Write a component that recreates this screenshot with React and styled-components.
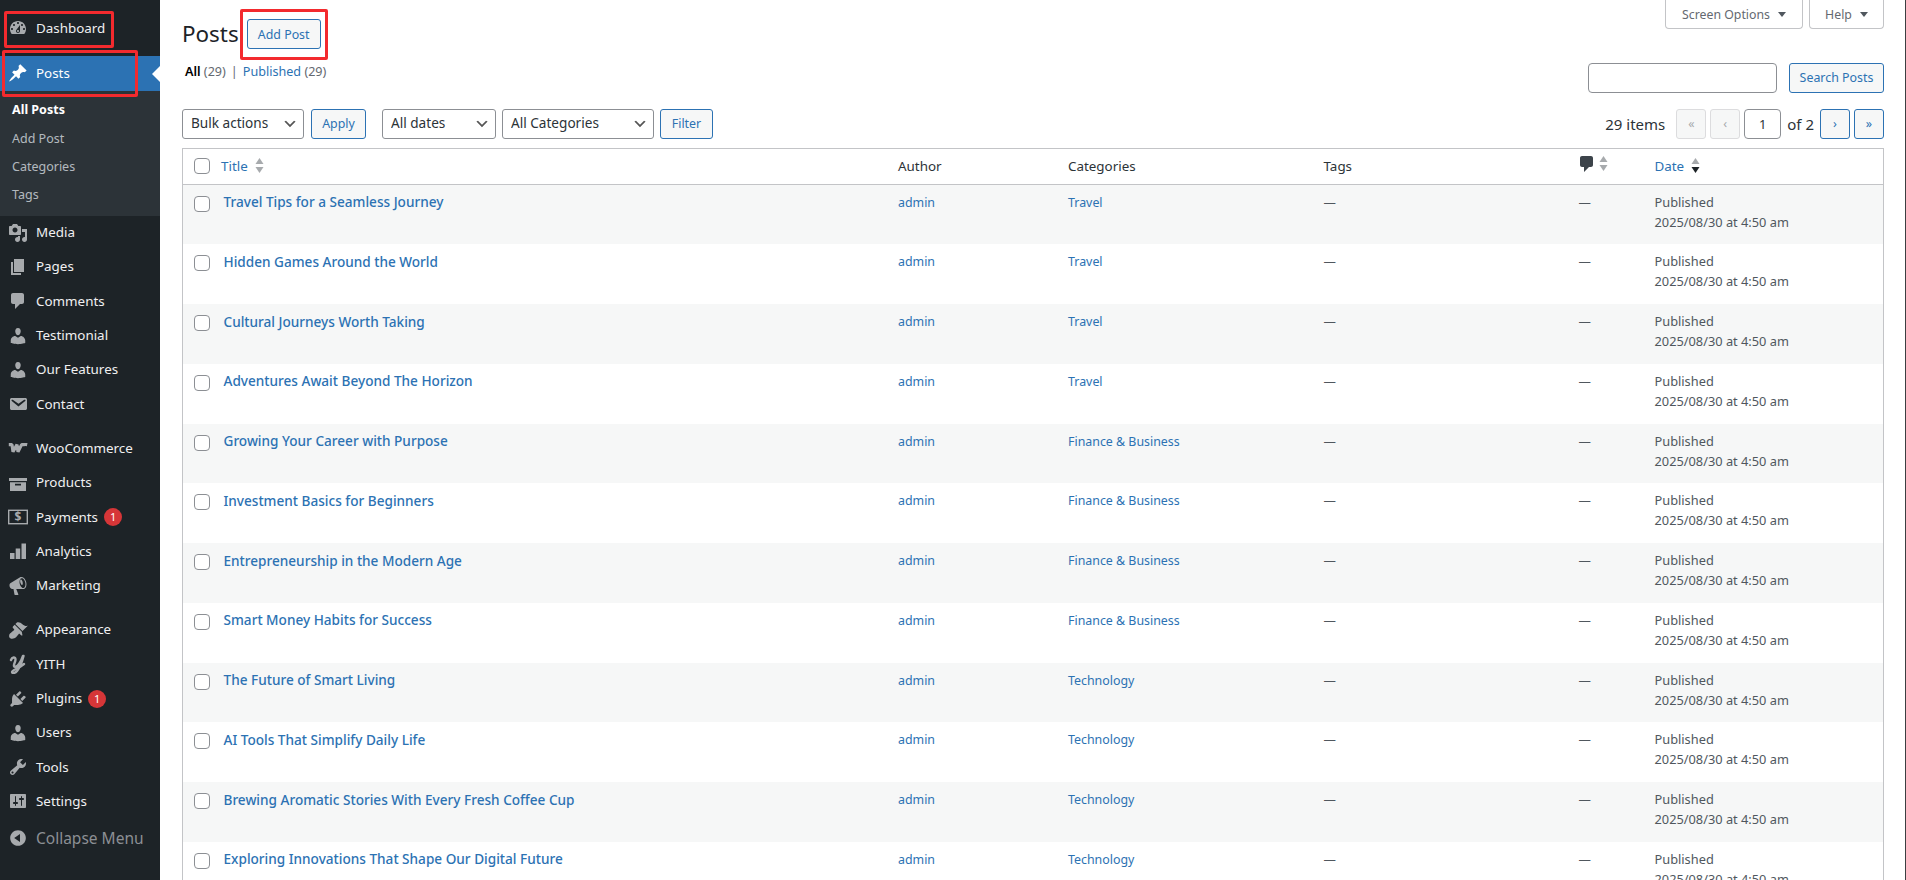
import React from 'react';
import styled, { createGlobalStyle } from 'styled-components';

const FONT = '"Noto Sans", "Open Sans", sans-serif';
const BLUE = '#2c72b3';

const GlobalStyle = createGlobalStyle`
  html, body { margin: 0; padding: 0; background: #fff; }
  body { font-family: ${FONT}; font-size: 13px; line-height: 1.4em; color: #3c434a; overflow: hidden; }
  * { box-sizing: border-box; }
`;

const Page = styled.div`
  position: relative;
  display: flex;
  height: 100vh;
  overflow: hidden;
  border-right: 1px solid #3c3f42;
`;

/* sidebar */
const Sidebar = styled.aside`
  width: 160px;
  flex: none;
  background: #1d2327;
  padding-top: 11px;
`;
const MenuItem = styled.a`
  position: relative;
  display: flex;
  align-items: center;
  height: 34.3px;
  font-size: 13.4px;
  color: ${p => (p.$active ? '#fff' : '#f0f0f1')};
  background: ${p => (p.$active ? BLUE : 'transparent')};
  svg { fill: ${p => (p.$active ? '#fff' : '#a7aaad')}; }
`;
const MenuLabel = styled.span`
  margin-top: -1px;
`;
const IconSlot = styled.span`
  width: 36px;
  flex: none;
  display: flex;
  justify-content: center;
  svg { width: 20px; height: 20px; display: block; }
`;
const Gap = styled.div`
  height: ${p => p.$h}px;
`;
const ActiveArrow = styled.span`
  position: absolute;
  right: 0;
  top: 10px;
  border: 8px solid transparent;
  border-left-width: 0;
  border-right-color: #fff;
`;
const Badge = styled.span`
  width: 18px;
  height: 18px;
  margin-left: 6px;
  border-radius: 50%;
  background: #d63638;
  color: #fff;
  font-size: 11px;
  line-height: 18px;
  text-align: center;
`;
const Submenu = styled.div`
  background: #2c3338;
  height: 125px;
  padding-top: 5.5px;
`;
const SubItem = styled.a`
  display: flex;
  align-items: center;
  height: 28.4px;
  padding-left: 12px;
  font-size: 12.5px;
  font-weight: ${p => (p.$current ? 700 : 400)};
  color: ${p => (p.$current ? '#fff' : 'rgba(240,246,252,.7)')};
`;
const Collapse = styled.div`
  display: flex;
  align-items: center;
  height: 34px;
  margin-top: 2px;
  font-size: 15.5px;
  color: #8c8f94;
  svg { fill: #a7aaad; }
`;

/* main column */
const Main = styled.main`
  flex: 1;
  min-width: 0;
  padding: 0 21px 0 22px;
`;
const TopRow = styled.div`
  display: flex;
  justify-content: space-between;
  height: 63px;
`;
const HeadLeft = styled.div`
  display: flex;
  align-items: flex-start;
  padding-top: 19px;
  gap: 8px;
`;
const PageTitle = styled.h1`
  margin: 0;
  font-size: 22.4px;
  font-weight: 400;
  line-height: 29px;
  color: #1d2327;
`;
const ScreenTabs = styled.div`
  display: flex;
  gap: 6px;
`;
const ScreenTab = styled.button`
  display: flex;
  align-items: center;
  gap: 8px;
  height: 29px;
  width: ${p => p.$w}px;
  justify-content: center;
  background: #fff;
  border: 1px solid #c3c4c7;
  border-top: none;
  border-radius: 0 0 4px 4px;
  font: 12.3px ${FONT};
  color: #646970;
  padding: 0;
`;
const TabCaret = styled.span`
  border: 4.5px solid transparent;
  border-top: 5px solid #50575e;
  border-bottom: none;
`;
const Button = styled.button`
  height: ${p => (p.$h ? p.$h : 29.5)}px;
  width: ${p => p.$w}px;
  flex: none;
  padding: 0;
  background: #f6f7f7;
  border: 1px solid ${p => (p.$disabled ? '#dcdcde' : BLUE)};
  border-radius: 3px;
  font: 12.4px ${FONT};
  color: ${p => (p.$disabled ? '#a7aaad' : BLUE)};
`;
const ListBar = styled.div`
  display: flex;
  justify-content: space-between;
  align-items: flex-start;
  height: 46px;
`;
const Views = styled.div`
  padding: 0 3px;
  margin-top: -1px;
  font-size: 12.6px;
  line-height: 20px;
  color: #646970;
  b { color: #000; font-weight: 600; }
  a { color: ${BLUE}; }
  i { font-style: normal; margin: 0 5px; color: #646970; }
`;
const SearchBox = styled.div`
  display: flex;
  gap: 12px;
`;
const TextInput = styled.input`
  width: ${p => p.$w}px;
  height: 29.5px;
  padding: 0;
  border: 1px solid #8c8f94;
  border-radius: 4px;
  background: #fff;
  font: 13px ${FONT};
  color: #2c3338;
  text-align: center;
`;
const Toolbar = styled.div`
  display: flex;
  justify-content: space-between;
  align-items: center;
  height: 29.5px;
  margin-bottom: 9px;
`;
const ToolGroup = styled.div`
  display: flex;
  align-items: center;
`;
const Select = styled.select`
  appearance: none;
  width: ${p => p.$w}px;
  height: 29.5px;
  margin: 0 ${p => p.$mr}px 0 ${p => p.$ml || 0}px;
  padding: 0 24px 2px 8px;
  border: 1px solid #8c8f94;
  border-radius: 3px;
  font: 13.6px ${FONT};
  color: #2c3338;
  background: #fff url("data:image/svg+xml,%3Csvg xmlns='http://www.w3.org/2000/svg' width='20' height='20'%3E%3Cpath d='M5 6l5 5 5-5 2 1-7 7-7-7 2-1z' fill='%23555'/%3E%3C/svg%3E") no-repeat right 5px top 55% / 16px 16px;
`;
const Pager = styled.div`
  display: flex;
  align-items: center;
  gap: 4px;
  font-size: 15px;
  color: #2c3338;
`;
const PagerText = styled.span`
  margin: 0 ${p => p.$mr}px 0 ${p => p.$ml}px;
`;

/* table */
const Table = styled.table`
  width: 100%;
  table-layout: fixed;
  border-collapse: separate;
  border-spacing: 0;
  border: 1px solid #c3c4c7;
`;
const HeadCell = styled.th`
  height: 36px;
  padding: 0 10px;
  text-align: left;
  font-weight: 400;
  font-size: 13.4px;
  color: #2c3338;
  border-bottom: 1px solid #c3c4c7;
  vertical-align: middle;
`;
const SortLink = styled.span`
  display: inline-flex;
  align-items: center;
  gap: ${p => (p.$plain ? 5 : 7)}px;
  color: ${p => (p.$plain ? '#3c434a' : BLUE)};
`;
const CheckHead = styled.th`
  padding: 0 0 0 11px;
  border-bottom: 1px solid #c3c4c7;
  vertical-align: middle;
`;
const CheckCell = styled.td`
  padding: 11px 0 0 11px;
  vertical-align: top;
`;
const Check = styled.span`
  display: block;
  width: 16px;
  height: 16px;
  border: 1px solid #8c8f94;
  border-radius: 4px;
  background: #fff;
`;
const Row = styled.tr`
  height: 59.75px;
  background: ${p => (p.$alt ? '#f6f7f7' : '#fff')};
`;
const Cell = styled.td`
  padding: ${p => (p.$primary ? '7.500px 10px 0 12.500px' : p.$date ? '7px 10px 0' : '8px 10px 0')};
  vertical-align: top;
  font-size: ${p => (p.$date ? 12.8 : 12.4)}px;
  line-height: 20px;
  color: #50575e;
`;
const PostTitle = styled.a`
  font-size: 13.6px;
  font-weight: 500;
  color: ${BLUE};
`;
const CellLink = styled.a`
  color: ${BLUE};
`;

/* red marks drawn over the screenshot */
const Annotation = styled.div`
  position: absolute;
  left: ${p => p.$x}px;
  top: ${p => p.$y}px;
  width: ${p => p.$w}px;
  height: ${p => p.$h}px;
  border: 3px solid #f32a2e;
  border-radius: 2px;
  pointer-events: none;
`;

const D = {
  dashboard: 'M3.76 16h12.48c1.1-1.37 1.76-3.11 1.76-5 0-4.42-3.58-8-8-8s-8 3.58-8 8c0 1.89.66 3.63 1.76 5zM10 4c.55 0 1 .45 1 1s-.45 1-1 1-1-.45-1-1 .45-1 1-1zM6 6c.55 0 1 .45 1 1s-.45 1-1 1-1-.45-1-1 .45-1 1-1zm8 0c.55 0 1 .45 1 1s-.45 1-1 1-1-.45-1-1 .45-1 1-1zm-5.37 5.55L12 7v6c0 1.1-.9 2-2 2s-2-.9-2-2c0-.57.24-1.08.63-1.45zM4 10c.55 0 1 .45 1 1s-.45 1-1 1-1-.45-1-1 .45-1 1-1zm12 0c.55 0 1 .45 1 1s-.45 1-1 1-1-.45-1-1 .45-1 1-1zm-5 3c0-.55-.45-1-1-1s-1 .45-1 1 .45 1 1 1 1-.45 1-1z',
  post: 'M10.44 3.02l1.82-1.82 6.36 6.35-1.83 1.82c-1.05-.68-2.48-.57-3.41.36l-.75.75c-.92.93-1.04 2.35-.35 3.41l-1.83 1.82-2.41-2.41-2.8 2.79c-.42.42-3.38 2.71-3.8 2.29s1.86-3.39 2.28-3.81l2.79-2.79L4.1 9.36l1.83-1.82c1.05.69 2.48.57 3.4-.36l.75-.75c.93-.92 1.05-2.35.36-3.41z',
  media: 'M13 11V4c0-.55-.45-1-1-1h-1.67L9 1H5L3.67 3H2c-.55 0-1 .45-1 1v7c0 .55.45 1 1 1h10c.55 0 1-.45 1-1zM7 4.5c1.38 0 2.5 1.12 2.5 2.5S8.38 9.5 7 9.5 4.5 8.38 4.5 7 5.62 4.5 7 4.5zM14 6h5v10.5c0 1.38-1.12 2.5-2.5 2.5S14 17.88 14 16.5s1.12-2.5 2.5-2.5c.17 0 .34.02.5.05V9h-3V6zm-4 8.05V13h2v3.5c0 1.38-1.12 2.5-2.5 2.5S7 17.88 7 16.5 8.12 14 9.5 14c.17 0 .34.02.5.05z',
  page: 'M6 15V2h10v13H6zm-1 1h8v2H3V5h2v11z',
  comment: 'M5 2h9c1.1 0 2 .9 2 2v7c0 1.1-.9 2-2 2h-2l-5 5v-5H5c-1.1 0-2-.9-2-2V4c0-1.1.9-2 2-2z',
  user: 'M10 9.25c-2.27 0-2.73-3.44-2.73-3.44C7 4.02 7.82 2 9.97 2c2.16 0 2.98 2.02 2.71 3.81 0 0-.41 3.44-2.68 3.44zm0 2.57L12.72 10c2.39 0 4.52 2.33 4.52 4.53v2.49s-3.65 1.13-7.24 1.13c-3.65 0-7.24-1.13-7.24-1.13v-2.49c0-2.25 1.94-4.48 4.47-4.48z',
  email: 'M3.87 4h13.25C18.37 4 19 4.59 19 5.79v8.42c0 1.19-.63 1.79-1.88 1.79H3.87c-1.25 0-1.88-.6-1.88-1.79V5.79c0-1.2.63-1.79 1.88-1.79zm6.62 8.6l6.74-5.53c.24-.2.43-.66.13-1.07-.29-.41-.82-.42-1.17-.17l-5.7 3.86L4.8 5.83c-.35-.25-.88-.24-1.17.17-.3.41-.11.87.13 1.07z',
  archive: 'M1 5h18v3H1zM2 9.2h16V18H2zM7 10.8v1.6h6v-1.6z',
  bars: 'M2 12h4.5v6H2zM7.7 7.5h4.5V18H7.7zM13.5 2.5H18V18h-4.5z',
  megaphone: 'M18.15 5.94c.46 1.62.38 3.22-.02 4.48-.42 1.28-1.26 2.18-2.3 2.48-.16.06-.26.06-.4.06-.06.02-.12.02-.18.02-.06.02-.14.02-.22.02h-6.8l2.22 5.5c.02.14-.06.26-.14.34-.08.1-.24.16-.34.16H6.95c-.1 0-.26-.06-.34-.16-.08-.08-.16-.2-.14-.34l-1-5.5H4.25l-.02-.02c-.5.06-1.08-.18-1.54-.62s-.88-1.08-1.06-1.88c-.24-.8-.2-1.56-.02-2.2.18-.62.58-1.08 1.06-1.3l.02-.02 9-5.4c.1-.06.18-.1.24-.16.06-.04.14-.08.24-.12.16-.08.28-.12.5-.18 1.04-.3 2.24.1 3.22 1 .98.86 1.8 2.24 2.26 3.86zm-2.58 5.98h-.02c.4-.1.74-.34 1.04-.7.58-.7.86-1.76.86-3.04 0-.64-.1-1.3-.26-1.98-.5-1.72-1.36-3.08-2.36-3.7-.48-.28-.98-.36-1.4-.2h-.02c-.4.1-.74.34-1.04.7-.58.7-.86 1.76-.86 3.04 0 .64.1 1.3.26 1.98.5 1.72 1.36 3.08 2.36 3.7.48.28.98.36 1.44.2zm-1.12-6.68c.38 1.28.48 2.4.28 3.1-.12.36-.48.6-.86.54-.12-.02-.26-.1-.4-.22-.38-.34-.86-1.08-1.14-2.14-.28-1.06-.28-2.02-.02-2.7.08-.2.2-.34.36-.4.16-.06.34-.04.52.04.42.24.94.96 1.26 1.78z',
  brush: 'M14.48 11.06L7.41 3.99l1.5-1.5c.5-.56 2.3-.47 3.51.32 1.21.8 1.43 1.28 2.91 2.1 1.18.64 2.45 1.26 4.45.85zm-.71.71L6.7 4.7 4.93 6.47c-.39.39-.39 1.02 0 1.41l1.06 1.06c.39.39.39 1.03 0 1.42-.6.6-1.43 1.11-2.21 1.69-.35.26-.7.53-1.01.84C1.43 13.23.28 16.4 2 18c1.53 1.63 4.77.63 6.05-.64.31-.31.58-.66.84-1.01.58-.78 1.09-1.61 1.69-2.21.39-.39 1.03-.39 1.42 0l1.06 1.06c.39.39 1.02.39 1.41 0z',
  plugin: 'M13.11 4.36L9.87 7.6 8 5.73l3.24-3.24c.35-.34 1.05-.2 1.56.32.52.51.66 1.21.31 1.55zm-8 1.77l.91-1.12 9.01 9.01-1.19.84c-.71.71-2.63 1.16-3.82 1.16H6.14L4.9 17.26c-.59.59-1.54.59-2.12 0-.59-.58-.59-1.53 0-2.12l1.24-1.24v-3.88c0-1.13.4-3.19 1.09-3.89zm7.26 3.97l3.24-3.24c.34-.35 1.04-.21 1.55.31.52.51.66 1.21.31 1.55l-3.24 3.25z',
  tools: 'M16.68 9.77c-1.34 1.34-3.3 1.67-4.95.99l-5.41 6.52c-.99.99-2.59.99-3.58 0s-.99-2.59 0-3.57l6.52-5.42c-.68-1.65-.35-3.61.99-4.95 1.28-1.28 3.12-1.62 4.72-1.06l-2.89 2.89 2.82 2.82 2.86-2.87c.53 1.58.18 3.39-1.08 4.67zM3.81 16.21c.4.39 1.04.39 1.43 0 .4-.4.4-1.04 0-1.43-.39-.4-1.03-.4-1.43 0-.39.39-.39 1.03 0 1.43z',
  settings: 'M18 16V4c0-.55-.45-1-1-1H3c-.55 0-1 .45-1 1v12c0 .55.45 1 1 1h14c.55 0 1-.45 1-1zM8 11h1c.55 0 1 .45 1 1s-.45 1-1 1H8v1.5c0 .28-.22.5-.5.5s-.5-.22-.5-.5V13H6c-.55 0-1-.45-1-1s.45-1 1-1h1V5.5c0-.28.22-.5.5-.5s.5.22.5.5V11zm5-2h-1c-.55 0-1-.45-1-1s.45-1 1-1h1V5.5c0-.28.22-.5.5-.5s.5.22.5.5V7h1c.55 0 1 .45 1 1s-.45 1-1 1h-1v5.5c0 .28-.22.5-.5.5s-.5-.22-.5-.5V9z',
  collapse: 'M10 2.16c4.33 0 7.84 3.51 7.84 7.84s-3.51 7.84-7.84 7.84S2.16 14.33 2.16 10 5.71 2.16 10 2.16zm2 11.72V6.12L6.18 9.97z',
};

const Icon = ({ name }) => (
  <IconSlot>
    <svg viewBox="0 0 20 20"><path d={D[name]} fillRule="evenodd" /></svg>
  </IconSlot>
);

const WooIcon = () => (
  <IconSlot>
    <svg viewBox="0 0 20 20">
      <path d="M.8 5.600h3.200l1 7.200 4-7.200 1 7.200 3.600-7.200c2 0 4.600-.2 5.600 0" fill="none" stroke="#a7aaad" strokeWidth="3.200" strokeLinejoin="bevel" />
    </svg>
  </IconSlot>
);

const PaymentsIcon = () => (
  <IconSlot>
    <svg viewBox="0 0 20 20">
      <rect x=".7" y="3.3" width="18.6" height="13.4" fill="none" stroke="#a7aaad" strokeWidth="1.4" />
      <text x="10" y="14.4" textAnchor="middle" fontSize="12" fontWeight="700" fontFamily={FONT} fill="#a7aaad">$</text>
    </svg>
  </IconSlot>
);

const YithIcon = () => (
  <IconSlot>
    <svg viewBox="0 0 20 20">
      <path
        d="M3 6C4 3 7.5 2.5 7.5 5.5 7.5 8 5.5 10 6 12c.5 1.5 3 1 5-2 2-2.5 3-5 4-8M15.5 2C14 8 12 13 9 17c-2 2.5-5 2.5-5 1 0-1.5 3.5-2.500 6-4 2-1 4-2.500 6-4"
        fill="none"
        stroke="#a7aaad"
        strokeWidth="2.4"
        strokeLinecap="round"
      />
    </svg>
  </IconSlot>
);

const SortArrows = ({ dark }) => (
  <svg width="9" height="15" viewBox="0 0 9 15">
    <path d="M4.5 0L8.5 6H.5z" fill="#a7aaad" />
    <path d="M4.5 15L.5 9h8z" fill={dark ? '#1d2327' : '#a7aaad'} />
  </svg>
);

const CommentHead = () => (
  <svg width="15" height="18" viewBox="2 1 15 18">
    <path d={D.comment} fill="#3c434a" />
  </svg>
);

const TOP_MENU = [
  { name: 'media', label: 'Media' },
  { name: 'page', label: 'Pages' },
  { name: 'comment', label: 'Comments' },
  { name: 'user', label: 'Testimonial' },
  { name: 'user', label: 'Our Features' },
  { name: 'email', label: 'Contact' },
  { gap: 10, custom: WooIcon, label: 'WooCommerce' },
  { name: 'archive', label: 'Products' },
  { custom: PaymentsIcon, label: 'Payments', badge: 1 },
  { name: 'bars', label: 'Analytics' },
  { name: 'megaphone', label: 'Marketing' },
  { gap: 10, name: 'brush', label: 'Appearance' },
  { custom: YithIcon, label: 'YITH' },
  { name: 'plugin', label: 'Plugins', badge: 1 },
  { name: 'user', label: 'Users' },
  { name: 'tools', label: 'Tools' },
  { name: 'settings', label: 'Settings' },
];

const POSTS = [
  ['Travel Tips for a Seamless Journey', 'Travel'],
  ['Hidden Games Around the World', 'Travel'],
  ['Cultural Journeys Worth Taking', 'Travel'],
  ['Adventures Await Beyond The Horizon', 'Travel'],
  ['Growing Your Career with Purpose', 'Finance & Business'],
  ['Investment Basics for Beginners', 'Finance & Business'],
  ['Entrepreneurship in the Modern Age', 'Finance & Business'],
  ['Smart Money Habits for Success', 'Finance & Business'],
  ['The Future of Smart Living', 'Technology'],
  ['AI Tools That Simplify Daily Life', 'Technology'],
  ['Brewing Aromatic Stories With Every Fresh Coffee Cup', 'Technology'],
  ['Exploring Innovations That Shape Our Digital Future', 'Technology'],
];

function App() {
  return (
    <Page>
      <GlobalStyle />
      <Sidebar>
        <MenuItem><Icon name="dashboard" /><MenuLabel>Dashboard</MenuLabel></MenuItem>
        <Gap $h={11} />
        <MenuItem $active><Icon name="post" /><MenuLabel>Posts</MenuLabel><ActiveArrow /></MenuItem>
        <Submenu>
          <SubItem $current>All Posts</SubItem>
          <SubItem>Add Post</SubItem>
          <SubItem>Categories</SubItem>
          <SubItem>Tags</SubItem>
        </Submenu>
        {TOP_MENU.map((item, i) => (
          <React.Fragment key={i}>
            {item.gap ? <Gap $h={item.gap} /> : null}
            <MenuItem>
              {item.custom ? <item.custom /> : <Icon name={item.name} />}
              <MenuLabel>{item.label}</MenuLabel>
              {item.badge ? <Badge>{item.badge}</Badge> : null}
            </MenuItem>
          </React.Fragment>
        ))}
        <Collapse><Icon name="collapse" />Collapse Menu</Collapse>
      </Sidebar>

      <Main>
        <TopRow>
          <HeadLeft>
            <PageTitle>Posts</PageTitle>
            <Button $w={74} $h={30}>Add Post</Button>
          </HeadLeft>
          <ScreenTabs>
            <ScreenTab $w={138}>Screen Options <TabCaret /></ScreenTab>
            <ScreenTab $w={75}>Help <TabCaret /></ScreenTab>
          </ScreenTabs>
        </TopRow>

        <ListBar>
          <Views><b>All</b> (29)<i>|</i><a>Published</a> (29)</Views>
          <SearchBox>
            <TextInput $w={189} />
            <Button $w={95}>Search Posts</Button>
          </SearchBox>
        </ListBar>

        <Toolbar>
          <ToolGroup>
            <Select $w={122} $mr={7}><option>Bulk actions</option></Select>
            <Button $w={55}>Apply</Button>
            <Select $w={114} $mr={6} $ml={16}><option>All dates</option></Select>
            <Select $w={152} $mr={6}><option>All Categories</option></Select>
            <Button $w={53}>Filter</Button>
          </ToolGroup>
          <Pager>
            <PagerText $mr={7} $ml={0}>29 items</PagerText>
            <Button $w={30} $disabled>«</Button>
            <Button $w={30} $disabled>‹</Button>
            <TextInput $w={37} defaultValue="1" />
            <PagerText $mr={2} $ml={2}>of 2</PagerText>
            <Button $w={30}>›</Button>
            <Button $w={30}>»</Button>
          </Pager>
        </Toolbar>

        <Table>
          <colgroup>
            <col width="28" />
            <col width="677" />
            <col width="170" />
            <col width="255.5" />
            <col width="255" />
            <col width="76" />
            <col />
          </colgroup>
          <thead>
            <tr>
              <CheckHead><Check /></CheckHead>
              <HeadCell><SortLink>Title <SortArrows /></SortLink></HeadCell>
              <HeadCell>Author</HeadCell>
              <HeadCell>Categories</HeadCell>
              <HeadCell>Tags</HeadCell>
              <HeadCell><SortLink $plain><CommentHead /><SortArrows /></SortLink></HeadCell>
              <HeadCell><SortLink>Date <SortArrows dark /></SortLink></HeadCell>
            </tr>
          </thead>
          <tbody>
            {POSTS.map(([title, category], i) => (
              <Row key={title} $alt={i % 2 === 0}>
                <CheckCell><Check /></CheckCell>
                <Cell $primary><PostTitle>{title}</PostTitle></Cell>
                <Cell><CellLink>admin</CellLink></Cell>
                <Cell><CellLink>{category}</CellLink></Cell>
                <Cell>—</Cell>
                <Cell>—</Cell>
                <Cell $date>Published<br />2025/08/30 at 4:50 am</Cell>
              </Row>
            ))}
          </tbody>
        </Table>
      </Main>

      <Annotation $x={4} $y={11} $w={110} $h={37} />
      <Annotation $x={2} $y={50} $w={136} $h={47} />
      <Annotation $x={240} $y={9} $w={88} $h={51} />
    </Page>
  );
}

export default App;
